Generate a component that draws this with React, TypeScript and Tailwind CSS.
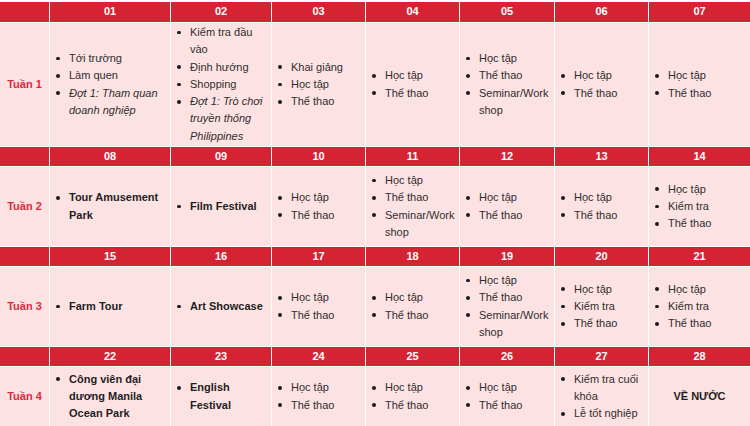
import React from "react";

type Item = { text: React.ReactNode; style?: "italic" | "bold" };
type Day = { n: string; items?: Item[]; center?: string };

const hoc = (extra: string[] = []): Item[] =>
  ["Học tập", "Thể thao", ...extra].map((t) => ({ text: t }));

const seminar: Item = {
  text: (
    <>
      Seminar/Work
      <br />
      shop
    </>
  ),
};

const kiemTra: Item[] = [{ text: "Học tập" }, { text: "Kiểm tra" }, { text: "Thể thao" }];

const weeks: { label: string; days: Day[] }[] = [
  {
    label: "Tuần 1",
    days: [
      {
        n: "01",
        items: [
          { text: "Tới trường" },
          { text: "Làm quen" },
          { text: "Đợt 1: Tham quan doanh nghiệp", style: "italic" },
        ],
      },
      {
        n: "02",
        items: [
          { text: "Kiểm tra đầu vào" },
          { text: "Định hướng" },
          { text: "Shopping" },
          { text: "Đợt 1: Trò chơi truyền thống Philippines", style: "italic" },
        ],
      },
      { n: "03", items: [{ text: "Khai giảng" }, ...hoc()] },
      { n: "04", items: hoc() },
      { n: "05", items: [...hoc(), seminar] },
      { n: "06", items: hoc() },
      { n: "07", items: hoc() },
    ],
  },
  {
    label: "Tuần 2",
    days: [
      { n: "08", items: [{ text: "Tour Amusement Park", style: "bold" }] },
      { n: "09", items: [{ text: "Film Festival", style: "bold" }] },
      { n: "10", items: hoc() },
      { n: "11", items: [...hoc(), seminar] },
      { n: "12", items: hoc() },
      { n: "13", items: hoc() },
      { n: "14", items: kiemTra },
    ],
  },
  {
    label: "Tuần 3",
    days: [
      { n: "15", items: [{ text: "Farm Tour", style: "bold" }] },
      { n: "16", items: [{ text: "Art Showcase", style: "bold" }] },
      { n: "17", items: hoc() },
      { n: "18", items: hoc() },
      { n: "19", items: [...hoc(), seminar] },
      { n: "20", items: kiemTra },
      { n: "21", items: kiemTra },
    ],
  },
  {
    label: "Tuần 4",
    days: [
      { n: "22", items: [{ text: "Công viên đại dương Manila Ocean Park", style: "bold" }] },
      { n: "23", items: [{ text: "English Festival", style: "bold" }] },
      { n: "24", items: hoc() },
      { n: "25", items: hoc() },
      { n: "26", items: hoc() },
      { n: "27", items: [{ text: "Kiểm tra cuối khóa" }, { text: "Lễ tốt nghiệp" }] },
      { n: "28", center: "VỀ NƯỚC" },
    ],
  },
];

function Cell({ day }: { day: Day }) {
  if (day.center) {
    return (
      <div className="bg-[#fde2e3] flex items-center justify-center font-bold text-[#1f1f1f]">
        {day.center}
      </div>
    );
  }
  return (
    <div className="bg-[#fde2e3] flex items-center pr-1">
      <ul className="pl-[6px]">
        {day.items!.map((it, i) => (
          <li
            key={i}
            className={
              "flex " +
              (it.style === "italic"
                ? "italic"
                : it.style === "bold"
                ? "font-bold text-[#1f1f1f]"
                : "")
            }
          >
            <span className="shrink-0 w-[13px] h-[17.3px] flex items-center">
              <span className="block w-[3.5px] h-[3.5px] rounded-full bg-[#1a1a1a]" />
            </span>
            <span>{it.text}</span>
          </li>
        ))}
      </ul>
    </div>
  );
}

export default function App() {
  return (
    <div
      className="w-[750px] h-[426px] bg-white pt-[2px] overflow-hidden text-[11px] leading-[17.3px] text-[#2e2e2e]"
      style={{ fontFamily: '"Liberation Sans", Arial, sans-serif' }}
    >
      <div className="grid grid-cols-[49px_120px_100px_93px_93px_94px_93px_1fr] grid-rows-[20px_123px_19px_79px_19px_79px_19px_59px] gap-px">
        {weeks.map((w) => (
          <React.Fragment key={w.label}>
            <div className="bg-[#d62333]" />
            {w.days.map((d) => (
              <div
                key={d.n}
                className="bg-[#d62333] text-white font-bold flex items-center justify-center"
              >
                {d.n}
              </div>
            ))}
            <div className="bg-[#fde2e3] flex items-center justify-center font-bold text-[#e02a3c]">
              {w.label}
            </div>
            {w.days.map((d) => (
              <Cell key={d.n} day={d} />
            ))}
          </React.Fragment>
        ))}
      </div>
    </div>
  );
}
